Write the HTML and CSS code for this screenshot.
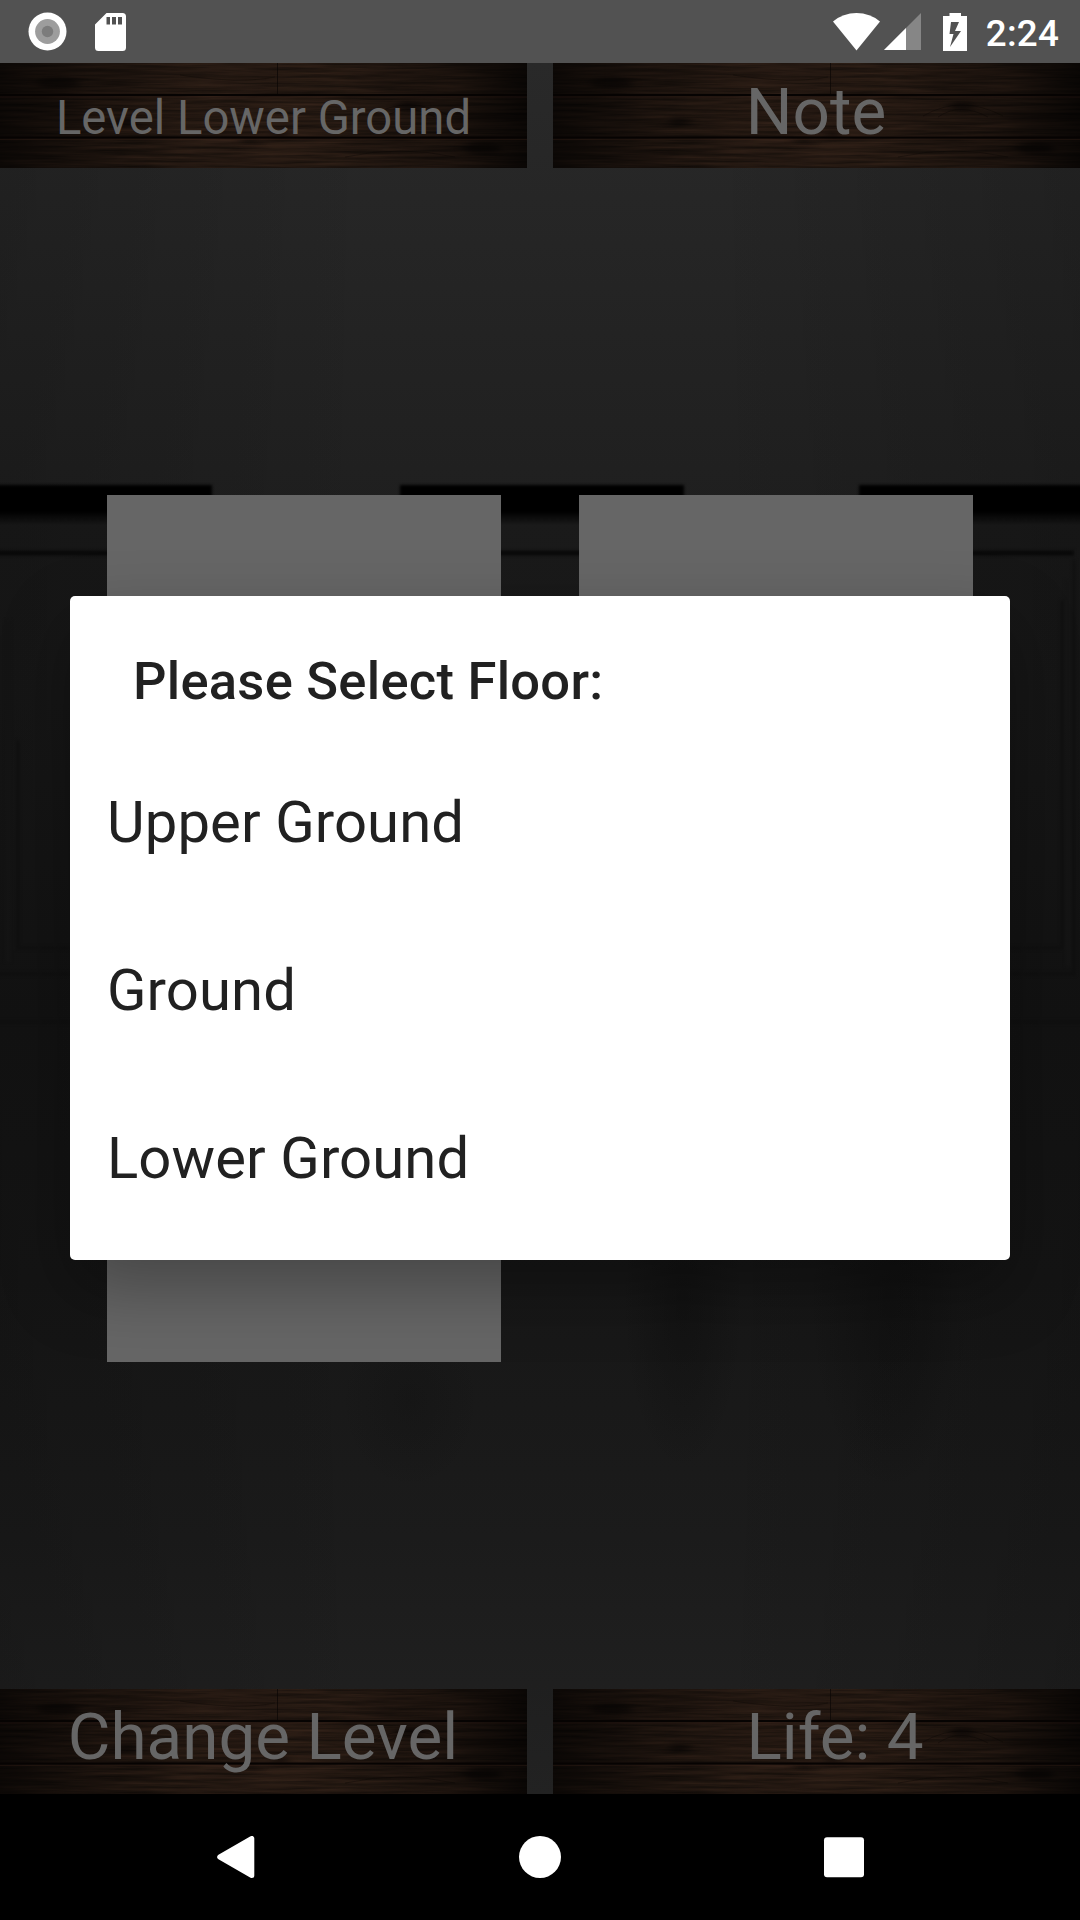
FILE: index.html
```html
<!DOCTYPE html>
<html lang="en">
<head>
<meta charset="utf-8">
<title>Select Floor</title>
<link rel="stylesheet" href="styles.css">
</head>
<body>
<svg class="defs" aria-hidden="true">
  <defs>
    <filter id="grain" x="0" y="0" width="100%" height="100%" color-interpolation-filters="sRGB">
      <feTurbulence type="fractalNoise" baseFrequency="0.012 0.32" numOctaves="4" seed="7"/>
      <feColorMatrix values="0.17 0 0 0 0.066  0.11 0 0 0 0.046  0.08 0 0 0 0.032  0 0 0 0 1"/>
    </filter>
    <filter id="soft" x="-30%" y="-60%" width="160%" height="220%" color-interpolation-filters="sRGB"><feGaussianBlur stdDeviation="5 2"/></filter>
    <linearGradient id="vignette">
      <stop offset="0" stop-color="#000" stop-opacity="0.7"/>
      <stop offset="0.18" stop-color="#000" stop-opacity="0.34"/>
      <stop offset="0.4" stop-color="#000" stop-opacity="0.06"/>
      <stop offset="0.65" stop-color="#000" stop-opacity="0.1"/>
      <stop offset="0.86" stop-color="#000" stop-opacity="0.38"/>
      <stop offset="1" stop-color="#000" stop-opacity="0.74"/>
    </linearGradient>
    <symbol id="wood" viewBox="0 0 527 105" preserveAspectRatio="none">
      <rect width="527" height="105" filter="url(#grain)"/>
      <g fill="#080504" filter="url(#soft)" opacity="0.6">
        <ellipse cx="58" cy="20" rx="22" ry="6"/>
        <ellipse cx="127" cy="59" rx="11" ry="4"/>
        <ellipse cx="409" cy="43" rx="13" ry="5"/>
        <ellipse cx="280" cy="71" rx="9" ry="3"/>
        <ellipse cx="250" cy="78" rx="10" ry="2"/>
        <ellipse cx="482" cy="85" rx="19" ry="6"/>
        <ellipse cx="490" cy="54" rx="45" ry="2"/>
      </g>
      <g fill="none" stroke="#0c0705" stroke-width="1" opacity="0.4">
        <path d="M370 53q38-22 80 0M385 54q22-15 50 0M345 94q55-12 110 0M180 12q60 9 95 2"/>
      </g>
      <rect width="527" height="105" fill="url(#vignette)"/>
      <path d="M0 32h527M0 74.5h527" stroke="#060302" stroke-width="2"/>
      <path d="M0 34h527M0 76.5h527" stroke="#3a2519" stroke-opacity="0.3"/>
      <path d="M277.500 0v31" stroke="#0a0604" stroke-opacity="0.7"/>
    </symbol>
  </defs>
</svg>

<div class="screen">
  <header class="status">
    <div class="status-left">
      <svg width="39" height="39" viewBox="0 0 39 39"><circle cx="19.500" cy="19.500" r="19" fill="#fff"/><circle cx="19.500" cy="19.500" r="12.400" fill="#9d9d9d"/><circle cx="19.500" cy="19.500" r="5.700" fill="#7c7c7c"/></svg>
      <svg width="31" height="38" viewBox="0 0 31 38"><path fill="#fff" fill-rule="evenodd" d="M11.500 0H27.500Q31 0 31 3.500V34.500Q31 38 27.500 38H3.500Q0 38 0 34.500V11.500ZM11.500 4V11.500H15V4ZM17 4V11.500H21V4ZM23 4V11.500H27V4Z"/></svg>
    </div>
    <div class="status-right">
      <svg width="47" height="38" viewBox="0 0 47 38"><path fill="#fff" d="M0 8.500Q10 0 23.500 0T47 8.500L23.500 37.500Z"/></svg>
      <svg class="signal" width="37" height="37" viewBox="0 0 37 37"><path fill="#868686" d="M37 0V37H0Z"/><path fill="#fff" d="M22 15V37H0Z"/></svg>
      <svg class="battery" width="24" height="38" viewBox="0 0 24 38"><path fill="#fff" fill-rule="evenodd" d="M6.500 0H18V3H24V38H0V3H6.500ZM8 9L6.500 21H10.500L7 34L18 18H12L16 9Z"/></svg>
      <span class="time">2:24</span>
    </div>
  </header>

  <main class="game">
    <div class="wall" aria-hidden="true">
      <svg width="1080" height="1731" viewBox="0 63 1080 1731">
        <defs>
          <linearGradient id="top" x1="0" y1="0" x2="0" y2="1"><stop offset="0" stop-color="#292929"/><stop offset="1" stop-color="#1f1f1f"/></linearGradient>
          <linearGradient id="mid" x1="0" y1="0" x2="0" y2="1"><stop offset="0" stop-color="#1a1a1a"/><stop offset="0.150" stop-color="#191919"/><stop offset="0.400" stop-color="#151515"/><stop offset="0.600" stop-color="#171717"/><stop offset="0.800" stop-color="#1b1b1b"/><stop offset="1" stop-color="#222"/></linearGradient>
          <linearGradient id="edge"><stop offset="0" stop-color="#000" stop-opacity="0.160"/><stop offset="0.350" stop-color="#000" stop-opacity="0"/><stop offset="0.650" stop-color="#000" stop-opacity="0"/><stop offset="1" stop-color="#000" stop-opacity="0.160"/></linearGradient>
          <radialGradient id="shade"><stop offset="0" stop-color="#0c0c0c" stop-opacity="0.450"/><stop offset="1" stop-color="#0c0c0c" stop-opacity="0"/></radialGradient>
          <filter id="b2" color-interpolation-filters="sRGB"><feGaussianBlur stdDeviation="1.500"/></filter>
          <linearGradient id="slot" x1="0" y1="0" x2="0" y2="1"><stop offset="0" stop-color="#000"/><stop offset="0.700" stop-color="#000"/><stop offset="1" stop-color="#161616"/></linearGradient>
        </defs>
        <rect y="63" width="1080" height="450" fill="url(#top)"/>
        <rect y="505" width="1080" height="1289" fill="url(#mid)"/>
        <g filter="url(#b2)">
          <path fill="url(#slot)" d="M-9 485H212V500H400V485H684V500H859V485H1090V523H-9Z"/>
          <path fill="none" stroke="#0a0a0a" stroke-width="5" d="M-5 553H1074"/>
          <path fill="none" stroke="#121212" stroke-width="3" d="M1074 560V974H-5M18 740V948H1062V600M-5 1022H1090"/>
          <path fill="none" stroke="#191919" stroke-width="5" d="M8 620V962M1068 580V966"/>
        </g>
        <g fill="url(#shade)"><ellipse cx="683" cy="1300" rx="60" ry="170"/><ellipse cx="890" cy="1300" rx="80" ry="190"/><ellipse cx="410" cy="1400" rx="70" ry="90" opacity="0.500"/></g>
        <rect y="63" width="1080" height="1731" fill="url(#edge)"/>
      </svg>
    </div>
    <div class="row">
      <div class="plank small upper"><svg class="wood"><use href="#wood"/></svg><span>Level Lower Ground</span></div>
      <div class="plank upper"><svg class="wood"><use href="#wood"/></svg><span>Note</span></div>
    </div>
    <div class="cards">
      <div class="card tall"></div>
      <div class="card"></div>
    </div>
    <div class="row">
      <div class="plank"><svg class="wood"><use href="#wood"/></svg><span>Change Level</span></div>
      <div class="plank life"><svg class="wood"><use href="#wood"/></svg><span>Life: 4</span></div>
    </div>
  </main>

  <nav class="nav">
    <svg width="42" height="42" viewBox="0 0 42 42"><path d="M36.800 2.500V39.500L4.700 21Z" fill="#fff" stroke="#fff" stroke-width="5" stroke-linejoin="round"/></svg>
    <svg width="42" height="42" viewBox="0 0 42 42"><circle cx="21" cy="21" r="21" fill="#fff"/></svg>
    <svg width="42" height="42" viewBox="0 0 42 42"><rect x="1" y="1.200" width="40" height="40" rx="3" fill="#fff"/></svg>
  </nav>

  <section class="dialog" role="dialog">
    <h1 class="title">Please Select Floor:</h1>
    <ul class="floors"><li>Upper Ground</li><li>Ground</li><li>Lower Ground</li></ul>
  </section>
</div>
</body>
</html>
```
FILE: styles.css
```css
* { box-sizing: border-box; }
body { margin: 0; background: #000; font-family: Roboto, sans-serif; }
svg { display: block; }
.defs { position: absolute; width: 0; height: 0; }
.screen { position: relative; display: flex; flex-direction: column; width: 1080px; height: 1920px; overflow: hidden; }

.status { display: flex; justify-content: space-between; height: 63px; padding: 0 21px 0 28px; background: #525252; color: #fff; }
.status-left, .status-right { display: flex; align-items: center; }
.status-left { gap: 28px; }
.signal { margin-left: 4px; }
.battery { margin-left: 22px; }
.time { margin-left: 19px; font-size: 36.75px; font-weight: 500; line-height: 43px; letter-spacing: .2px; padding-top: 3px; }

.game { position: relative; display: flex; flex-direction: column; justify-content: space-between; height: 1731px; }
.wall { position: absolute; inset: 0; }
.row { position: relative; display: grid; grid-template-columns: 527px 527px; justify-content: space-between; height: 105px; }
.plank { position: relative; display: flex; justify-content: center; font-size: 65.6px; line-height: 77px; color: #666; padding: 9px 1px 0 0; white-space: pre; }
.plank.upper { padding-top: 10px; }
.plank.small { font-size: 47.25px; line-height: 55px; padding: 28px 0 0; }
.plank.life span { margin-left: 38px; }
.plank span { position: relative; }
.wood { position: absolute; inset: 0; width: 100%; height: 100%; }
.cards { position: relative; display: flex; gap: 78px; padding-left: 107px; height: 867px; }
.card { width: 394px; height: 394px; background: #666; }
.card.tall { height: 867px; }

.nav { display: flex; justify-content: space-between; align-items: center; height: 126px; padding: 0 215px; background: #000; }

.dialog { position: absolute; left: 70px; top: 596px; width: 940px; height: 664px; padding: 48px 35px 0; border-radius: 5px; background: #fff; color: #212121; box-shadow: 0 28px 70px rgba(0, 0, 0, .32); }
.title { margin: 0; padding-left: 28px; font-size: 52.5px; font-weight: 500; line-height: 74px; letter-spacing: .26px; }
.floors { margin: 20px 0 0; padding: 0 0 0 2px; list-style: none; }
.floors li { height: 168px; font-size: 58px; line-height: 168px; letter-spacing: .1px; }
```
